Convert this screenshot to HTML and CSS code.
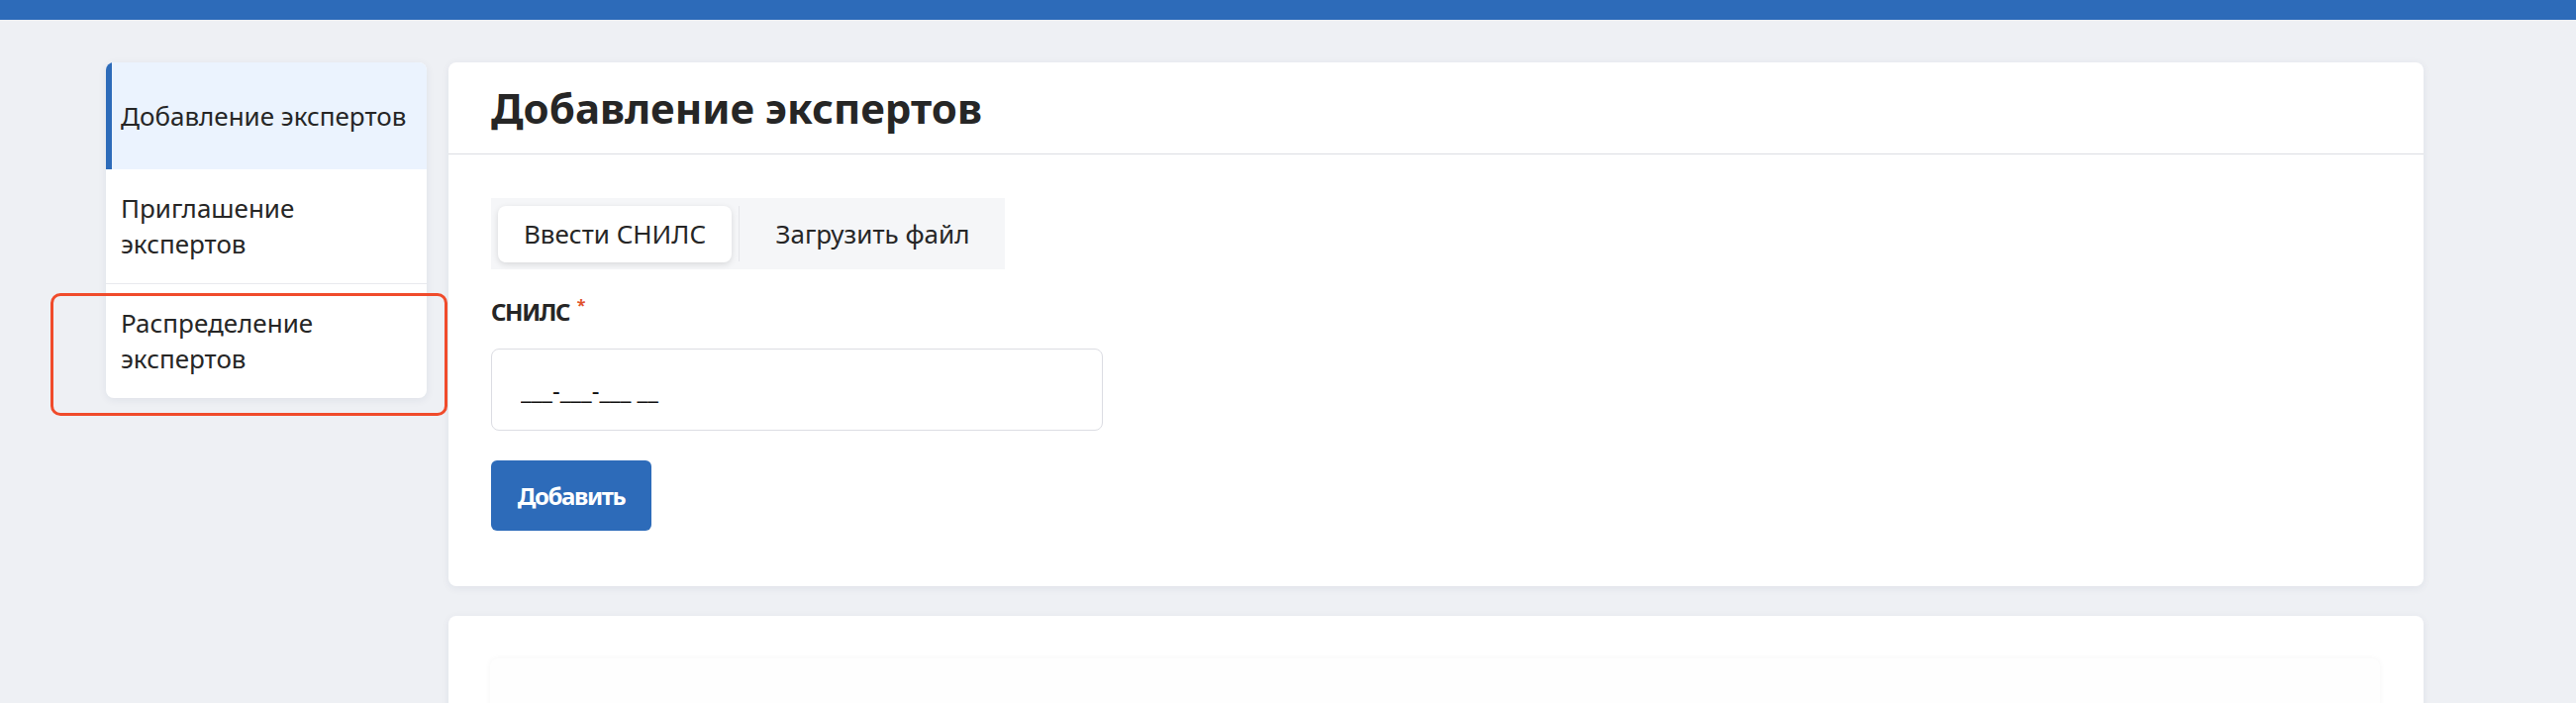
FILE: index.html
```html
<!DOCTYPE html>
<html lang="ru">
<head>
<meta charset="utf-8">
<title>Добавление экспертов</title>
<link rel="stylesheet" href="styles.css">
</head>
<body>
<div class="topbar"></div>
<div class="layout">
  <aside class="sidebar-wrap">
    <nav class="sidebar">
      <div class="nav-item active">Добавление экспертов</div>
      <div class="nav-item">Приглашение экспертов</div>
      <div class="nav-item divided">Распределение экспертов</div>
    </nav>
    <div class="highlight"></div>
  </aside>
  <main class="main">
    <section class="card">
      <header class="card-header">
        <h1 class="title">Добавление экспертов</h1>
      </header>
      <div class="card-body">
        <div class="tabs">
          <div class="tab tab-active">Ввести СНИЛС</div>
          <div class="tab-sep"></div>
          <div class="tab tab-second">Загрузить файл</div>
        </div>
        <label class="label">СНИЛС <span class="req">*</span></label>
        <input class="input" type="text" value="___-___-___ __">
        <button class="btn">Добавить</button>
      </div>
    </section>
    <section class="card card-second">
      <div class="inner-box"></div>
    </section>
  </main>
</div>
</body>
</html>
```
FILE: styles.css
```css
html, body {
  margin: 0;
  padding: 0;
  overflow: hidden;
}
body {
  background: #eef0f4;
  font-family: "Noto Sans", "Open Sans", sans-serif;
  color: #262626;
}
.topbar {
  height: 20px;
  background: #2d6bb9;
}
.layout {
  display: flex;
  align-items: flex-start;
  gap: 22px;
  padding: 43px 0 0 107px;
}
.sidebar-wrap {
  position: relative;
  width: 324px;
  flex: 0 0 324px;
}
.sidebar {
  background: #fff;
  border-radius: 8px;
  overflow: hidden;
  box-shadow: 0 2px 8px rgba(30, 40, 80, 0.07);
}
.nav-item {
  display: flex;
  align-items: center;
  min-height: 108px;
  box-sizing: border-box;
  padding: 21px 15px 22px;
  font-size: 26px;
  line-height: 36px;
}
.nav-item.active {
  background: #ebf3fe;
  box-shadow: inset 6px 0 0 #2d6bb9;
}
.nav-item.divided {
  border-top: 1px solid #e8e9ee;
}
.highlight {
  position: absolute;
  left: -56px;
  top: 233px;
  width: 401px;
  height: 124px;
  box-sizing: border-box;
  border: 3px solid #f04b2b;
  border-radius: 10px;
  pointer-events: none;
}
.main {
  width: 1995px;
  flex: 0 0 1995px;
}
.card {
  background: #fff;
  border-radius: 8px;
  box-shadow: 0 2px 8px rgba(30, 40, 80, 0.07);
}
.card-header {
  height: 92px;
  border-bottom: 1px solid #dcdde3;
  display: flex;
  align-items: center;
  padding: 0 43px;
}
.title {
  margin: 0;
  font-size: 42px;
  font-weight: 700;
  line-height: 1.2;
  color: #262626;
}
.card-body {
  display: flex;
  flex-direction: column;
  align-items: flex-start;
  padding: 44px 43px 56px;
}
.tabs {
  display: flex;
  align-items: center;
  background: #f5f6f8;
  padding: 7px;
  height: 72px;
  box-sizing: border-box;
}
.tab {
  width: 236px;
  height: 57px;
  display: flex;
  align-items: center;
  justify-content: center;
  font-size: 26px;
  color: #262626;
  border-radius: 8px;
  white-space: nowrap;
}
.tab-second {
  width: 253px;
}
.tab-active {
  background: #fff;
  box-shadow: 0 2px 6px rgba(0, 0, 0, 0.12);
}
.tab-sep {
  width: 1px;
  height: 56px;
  background: #e4e5ea;
  margin: 0 8px 0 7px;
}
.label {
  margin-top: 26px;
  font-size: 24px;
  letter-spacing: -1.4px;
  line-height: 33px;
  font-weight: 700;
  color: #262626;
}
.req {
  color: #e0522c;
  font-size: 16px;
  letter-spacing: 0;
  margin-left: 3px;
  vertical-align: top;
  line-height: 20px;
}
.input {
  margin-top: 21px;
  width: 618px;
  height: 83px;
  box-sizing: border-box;
  border: 1px solid #dcdde3;
  border-radius: 8px;
  padding: 0 29px;
  font-family: "Noto Sans", "Open Sans", sans-serif;
  font-size: 24px;
  color: #111;
  background: #fff;
  outline: none;
}
.btn {
  margin-top: 30px;
  width: 162px;
  height: 71px;
  border: 0;
  border-radius: 6px;
  background: #2d6bb9;
  color: #fff;
  font-family: "Noto Sans", "Open Sans", sans-serif;
  font-size: 24px;
  letter-spacing: -1.4px;
  font-weight: 700;
}
.card-second {
  margin-top: 30px;
  min-height: 400px;
  padding: 43px 44px 43px 42px;
}
.inner-box {
  height: 300px;
  background: #fefefe;
  border-radius: 8px;
  box-shadow: 0 0 6px rgba(0, 0, 0, 0.04);
}
```
